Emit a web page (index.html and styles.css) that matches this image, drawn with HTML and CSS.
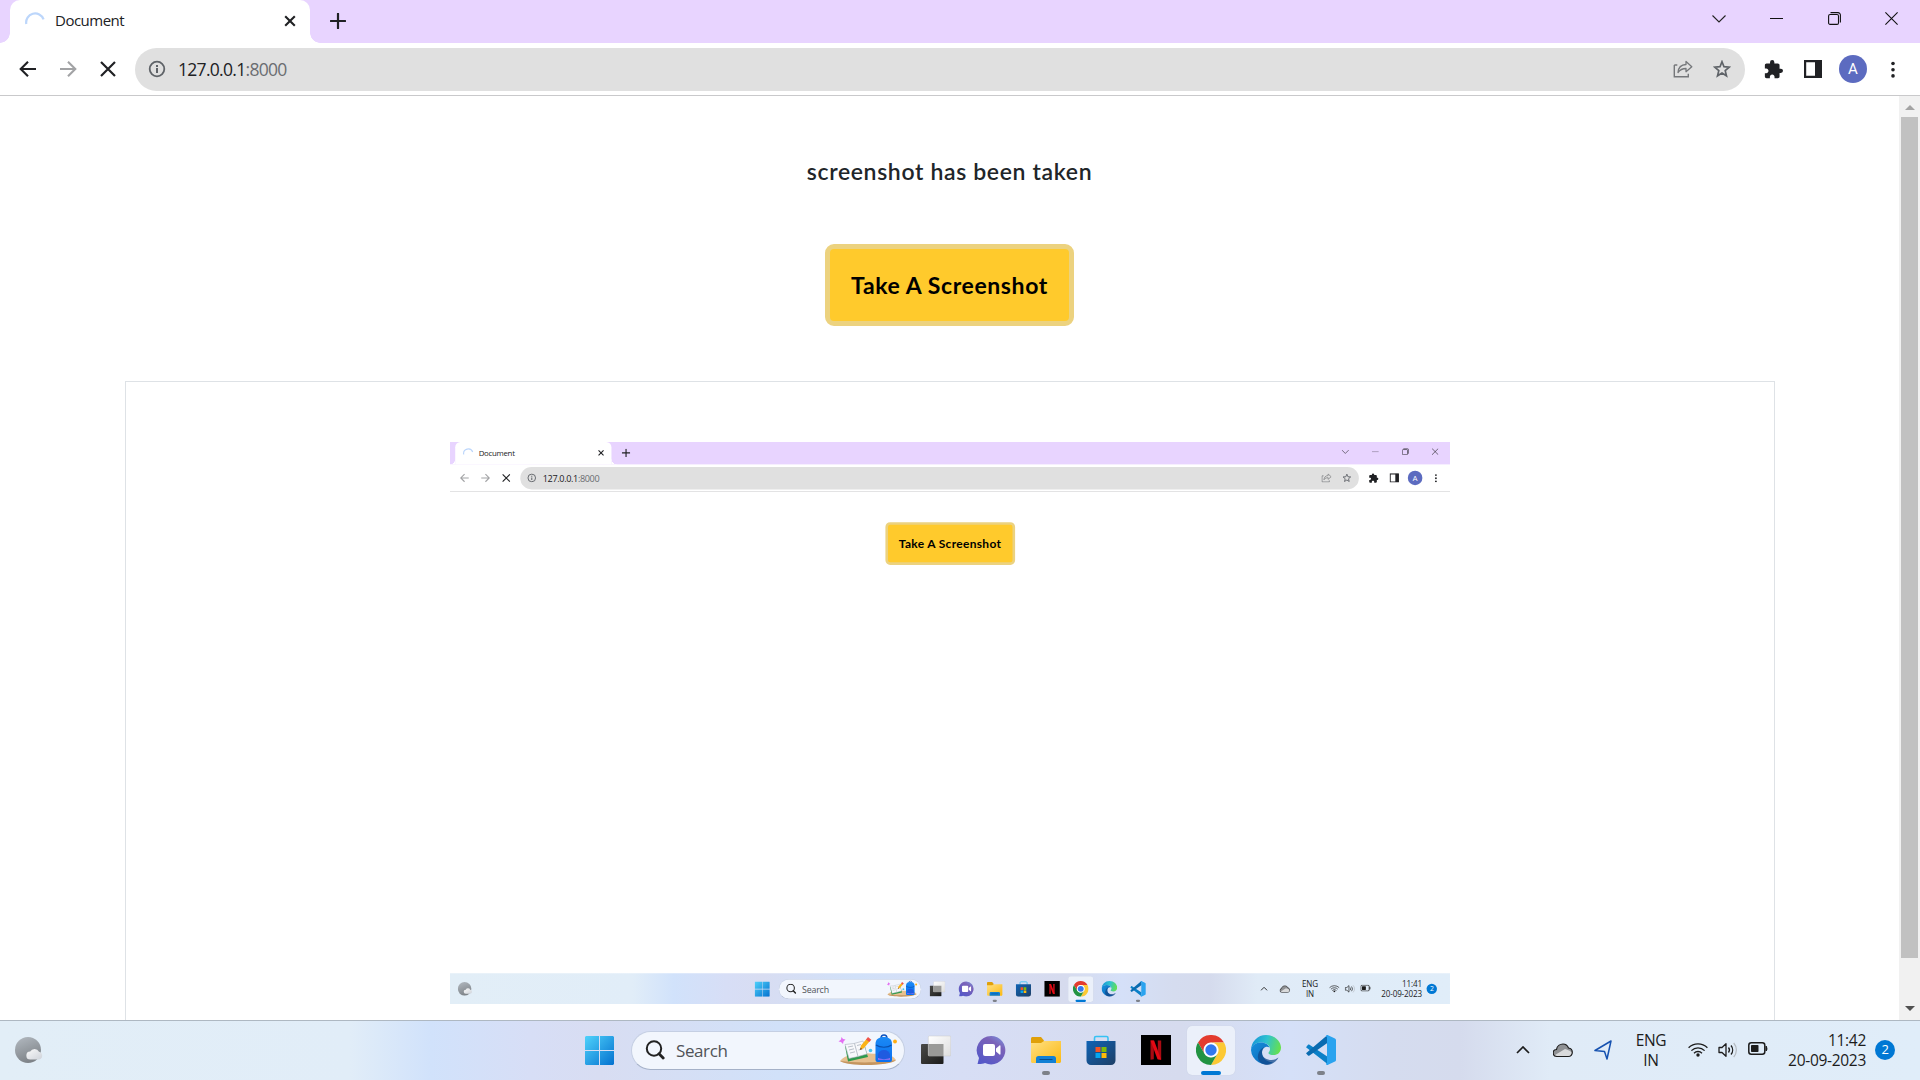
FILE: index.html
```html
<!DOCTYPE html>
<html lang="en">
<head>
<meta charset="utf-8">
<title>Document</title>
<link rel="stylesheet" href="styles.css">
</head>
<body>
<svg class="defs" width="0" height="0" aria-hidden="true">
  <defs>
    <linearGradient id="gStart" x1="0" y1="0" x2="1" y2="1"><stop offset="0" stop-color="#4fd2fb"/><stop offset="1" stop-color="#0471cf"/></linearGradient>
    <linearGradient id="gMoon" x1="0" y1="0" x2=".4" y2="1"><stop offset="0" stop-color="#b3bac1"/><stop offset="1" stop-color="#7f8489"/></linearGradient>
    <linearGradient id="gCloud" x1="0" y1="0" x2="1" y2="1"><stop offset="0" stop-color="#fafafa"/><stop offset="1" stop-color="#cfd3da"/></linearGradient>
    <linearGradient id="gChat" x1="1" y1="0" x2=".3" y2="1"><stop offset="0" stop-color="#7a9be4"/><stop offset=".35" stop-color="#7b62b8"/><stop offset="1" stop-color="#5558c8"/></linearGradient>
    <linearGradient id="gFolder" x1="0" y1="0" x2="1" y2="1"><stop offset="0" stop-color="#ffe084"/><stop offset="1" stop-color="#fbb912"/></linearGradient>
    <linearGradient id="gStore" x1="0" y1="0" x2="1" y2="1"><stop offset="0" stop-color="#0f63b5"/><stop offset="1" stop-color="#1e3f66"/></linearGradient>
    <linearGradient id="gEdgeTop" x1="0" y1=".3" x2="1" y2=".5"><stop offset="0" stop-color="#1794d8"/><stop offset=".5" stop-color="#2fc3cf"/><stop offset="1" stop-color="#66e04e"/></linearGradient>
    <linearGradient id="gEdgeLow" x1="0" y1="0" x2="1" y2="1"><stop offset="0" stop-color="#1690dc"/><stop offset="1" stop-color="#0b62b5"/></linearGradient>
    <linearGradient id="gBlack" x1="0" y1="0" x2="1" y2="1"><stop offset="0" stop-color="#4a4a48"/><stop offset="1" stop-color="#1c1c1b"/></linearGradient>
    <linearGradient id="gWhite" x1="0" y1="0" x2="1" y2="1"><stop offset="0" stop-color="#ffffff"/><stop offset="1" stop-color="#dedede"/></linearGradient>
    <linearGradient id="gBag" x1="0" y1="0" x2="0" y2="1"><stop offset="0" stop-color="#1b8af5"/><stop offset="1" stop-color="#0a6ff0"/></linearGradient>
  </defs>

  <symbol id="spinner" viewBox="0 0 20 20"><path d="M1.3 13A9 9 0 0 1 18.6 8.3" fill="none" stroke="#bcd6fb" stroke-width="2.2"/></symbol>
  <symbol id="tabclose" viewBox="0 0 12 12"><path d="M1.2 1.2l9.6 9.6M10.800 1.200l-9.600 9.600" stroke="#202124" stroke-width="2.1" fill="none"/></symbol>
  <symbol id="plus" viewBox="0 0 16 16"><path d="M8 .8v14.400M.8 8h14.400" stroke="#202124" stroke-width="2.200" fill="none" stroke-linecap="round"/></symbol>
  <symbol id="back" viewBox="0 0 18 18"><path d="M17 9H2M9 1.700L1.700 9 9 16.300" fill="none" stroke="currentColor" stroke-width="2.1"/></symbol>
  <symbol id="stop" viewBox="0 0 16 16"><path d="M1 1l14 14M15 1L1 15" fill="none" stroke="#202124" stroke-width="2.2"/></symbol>
  <symbol id="info" viewBox="0 0 18 18"><circle cx="9" cy="9" r="7.300" fill="none" stroke="#5f6368" stroke-width="1.800"/><path d="M9 8v5M9 5v1.900" stroke="#5f6368" stroke-width="2"/></symbol>
  <symbol id="share" viewBox="0 0 20 18"><path d="M1.300 5v11.700h14v-3M1.300 5h3" fill="none" stroke="#75777a" stroke-width="1.400"/><path d="M5 12.500c.4-5 3-7.800 8-8V1.400l5.800 5.300-5.800 5V8.500c-3.600 0-6 1.200-8 4z" fill="none" stroke="#75777a" stroke-width="1.300" stroke-linejoin="round"/></symbol>
  <symbol id="star" viewBox="0 0 18 18"><path d="M9 1.700l2 5 5.300.4-4.100 3.500 1.300 5.200L9 13l-4.500 2.800 1.300-5.200L1.700 7.100l5.300-.4z" fill="none" stroke="#5f6368" stroke-width="1.700"/></symbol>
  <symbol id="puzzle" viewBox="1 1 22 22"><path d="M20.500 11H19V7c0-1.100-.9-2-2-2h-4V3.500a2.500 2.500 0 0 0-5 0V5H4c-1.100 0-2 .9-2 2v3.800h1.500c1.500 0 2.700 1.200 2.700 2.700S5 16.200 3.500 16.200H2V20c0 1.100.9 2 2 2h3.800v-1.500c0-1.500 1.200-2.700 2.700-2.700s2.700 1.200 2.700 2.700V22H17c1.100 0 2-.9 2-2v-4h1.500a2.500 2.500 0 0 0 0-5z" fill="#202124"/></symbol>
  <symbol id="panel" viewBox="0 0 18 18"><path d="M1.100 1.100h15.800v15.800H1.100z" fill="#fff" stroke="#202124" stroke-width="2.200"/><path d="M11 1h6v16h-6z" fill="#202124"/></symbol>
  <symbol id="dots" viewBox="0 0 4 16"><g fill="#202124"><circle cx="2" cy="2" r="1.800"/><circle cx="2" cy="8.200" r="1.800"/><circle cx="2" cy="14.400" r="1.800"/></g></symbol>
  <symbol id="wchev" viewBox="0 0 14 8"><path d="M.5.500L7 7 13.500.500" fill="none" stroke="#222" stroke-width="1.100"/></symbol>
  <symbol id="wmin" viewBox="0 0 14 2"><path d="M0 .5h13" stroke="#111" stroke-width="1"/></symbol>
  <symbol id="wrestore" viewBox="0 0 13 13"><rect x=".6" y="2.500" width="9.900" height="9.900" rx="1.500" fill="none" stroke="#111" stroke-width="1.100"/><path d="M2.500.6h7.500a2.400 2.400 0 0 1 2.400 2.400v7.500" fill="none" stroke="#111" stroke-width="1.100"/></symbol>
  <symbol id="wclose" viewBox="0 0 13 13"><path d="M.4.400l12.200 12.200M12.600.400L.4 12.600" stroke="#111" stroke-width="1.100"/></symbol>

  <symbol id="weather" viewBox="0 0 28 26"><circle cx="13" cy="13" r="13" fill="url(#gMoon)"/><path d="M15.500 22.500a4 4 0 0 1-.3-8 5 5 0 0 1 8.800.2 4 4 0 0 1 .2 7.800z" fill="url(#gCloud)"/></symbol>
  <symbol id="start" viewBox="0 0 29 29"><path d="M1 0h13v14H0V1zM15 0h13l1 1v13H15zM0 15h14v14H1l-1-1zM15 15h14v13l-1 1H15z" fill="url(#gStart)"/></symbol>
  <symbol id="lens" viewBox="0 0 20 20"><circle cx="9" cy="8.500" r="7.200" fill="none" stroke="#222" stroke-width="2"/><path d="M14 13.700l4.200 4.300" stroke="#222" stroke-width="2.800" stroke-linecap="round"/></symbol>
  <symbol id="doodle" viewBox="0 0 60 32">
    <path d="M2 27C9 19 22 19 32 19.500s22-.5 26 6.500c-4 5-48 6-56 1z" fill="#e6c08f"/><path d="M2 27c15 2 41 2 56-1-5 6-48 7-56 1z" fill="#c4955f"/>
    <path d="M7 12l3 15.500 20-4.500-1-3-3-11z" fill="#2e9a4c"/><path d="M7 10.500l9-1 9-2.500 4 13-9 2.500-9 2z" fill="#f7f8fb" stroke="#a9b0bc" stroke-width=".6"/><path d="M16.500 9.500l3.500 13M10 13l5-1M11 16l5-1.200M12 19l5-1.200M19 11.500l4-1M20.500 16l5-1.300" stroke="#aab1bc" stroke-width=".8"/>
    <path d="M22 16l1-4.500L28.500 5l3 2.500L26 14z" fill="#fbb318"/><path d="M28 5.500L30 3l3.300 2.700-2 2.300z" fill="#f0534b"/><path d="M22 16l.5-2.500 1.700 1.500z" fill="#7b4a23"/>
    <path d="M43 4.500Q43 1 46 1t3 3.500" fill="none" stroke="#0a50bd" stroke-width="1.400"/><path d="M37.500 26V10c0-5 3.500-7 8.300-7S54 5 54 10v16a2 2 0 0 1-2 2H39.500a2 2 0 0 1-2-2z" fill="url(#gBag)"/><path d="M38 11c4 3 12 3 15.500 0" fill="none" stroke="#0a4fae" stroke-width="1.200"/><path d="M40 25v-4a6 5 0 0 1 12 0v4z" fill="#1f5be0"/><path d="M40 24c3 1.500 9 1.500 12 0v1.800H40z" fill="#a26ef2"/>
    <path d="M3.500 3l1.500 2 2.500.5L5.500 7.500 5 10 3 8 .5 7.500 3 5.500z" fill="#e36ff3"/><circle cx="32.500" cy="16.500" r="1.800" fill="#49c5ef"/><circle cx="57" cy="7.500" r="1.900" fill="#ffae12"/>
  </symbol>
  <symbol id="taskview" viewBox="0 0 30 30"><rect x="0" y="9" width="22.500" height="20" rx="1" fill="url(#gBlack)"/><rect x="7.300" y="1" width="22.500" height="20" rx="1" fill="url(#gWhite)" stroke="#c9c9c9" stroke-width=".5"/><path d="M7.500 9h15v12h-15z" fill="#9a9a98"/></symbol>
  <symbol id="chat" viewBox="0 0 30 30"><path d="M15 1a14.200 14.200 0 1 1-6 27c-2 .8-5 1.300-7.500 1L3 23A14.300 14.300 0 0 1 15 1z" fill="url(#gChat)"/><rect x="7" y="9" width="12" height="12" rx="2" fill="#fff"/><path d="M20 13.500l3.500-3c.5-.4 1 0 1 .5v8c0 .5-.5.900-1 .5l-3.500-3z" fill="#fff"/></symbol>
  <symbol id="explorer" viewBox="0 0 30 30"><path d="M0 3.500C0 2.700.7 2 1.500 2H10l3 3.500V10H0z" fill="#e0a009"/><path d="M0 8h10l3-2h17v20.500c0 .8-.7 1.500-1.500 1.500h-27C.700 28 0 27.300 0 26.500z" fill="url(#gFolder)"/><path d="M5 28v-4.500a2.500 2.500 0 0 1 2.500-2.500h15a2.500 2.500 0 0 1 2.500 2.500V28z" fill="#1180d5"/><path d="M8.500 24.500h13" stroke="#084d8d" stroke-width="1"/></symbol>
  <symbol id="store" viewBox="0 0 30 30"><path d="M8.500 7V3c0-1 .5-1.500 1.500-1.500h10.500c1 0 1.500.5 1.500 1.500v4" fill="none" stroke="#37c2f4" stroke-width="1.600"/><path d="M.5 6h29v19.500a4.500 4.500 0 0 1-4.500 4.500H5a4.500 4.500 0 0 1-4.500-4.500z" fill="url(#gStore)"/><path d="M9.500 12h5v5h-5z" fill="#f35325"/><path d="M15.500 12h5v5h-5z" fill="#81bc06"/><path d="M9.500 18h5v5h-5z" fill="#05a6f0"/><path d="M15.500 18h5v5h-5z" fill="#ffba08"/></symbol>
  <symbol id="netflix" viewBox="0 0 30 30"><path d="M0 0h30v30H0z"/><path d="M9.500 5.500h3.300v18.800l-3.300.5zM16.800 5.500h3.400v19.300l-3.400-.5z" fill="#a90a12"/><path d="M9.500 5.500h3.600l7.100 19.300-3.700-.5z" fill="#e50914"/></symbol>
  <symbol id="chrome" viewBox="0 0 30 30"><path d="M2 7.500A15 15 0 0 1 28 7.500H15a7.500 7.500 0 0 0-6.500 11.200z" fill="#e33b2e"/><path d="M28 7.500A15 15 0 0 1 15 30l6.500-11.200A7.500 7.500 0 0 0 15 7.500z" fill="#fcc934"/><path d="M15 30A15 15 0 0 1 2 7.500l6.500 11.300a7.500 7.500 0 0 0 13 0z" fill="#229342"/><circle cx="15" cy="15" r="7.200" fill="#fff"/><circle cx="15" cy="15" r="5.700" fill="#3178ee"/></symbol>
  <symbol id="edge" viewBox="0 0 30 30"><path d="M0 15A15 15 0 0 1 15 0c9 0 15 6.500 15 12.500 0 5-3.500 7.500-7.500 7.500-3 0-5.300-1-5-2.200.2-.8 1.500-1.500 1.500-3.800C19 10 14.500 7.500 10 7.500 4.500 7.500 1 10.500 0 15z" fill="url(#gEdgeTop)"/><path d="M0 15C.5 10.500 4.500 7.500 10 7.500c4.500 0 7.500 2.500 8.500 5-3-2-7.500 0-7.500 5C11 24 17 27 22 27.500A15 15 0 0 1 0 15z" fill="url(#gEdgeLow)"/><path d="M11 17.500c0 5.500 5 7.500 9.500 7.500 3 0 5.500-1.500 7-2.500C26 26 21 30 15 30 8 29 5 23 8 17c1.500-3 4-4.500 6-5-2 1-3 3-3 5.500z" fill="#114a8b" opacity=".75"/></symbol>
  <symbol id="vscode" viewBox="0 0 30 30"><path d="M21.500 1v28L0 12.200l2-2.400c.4-.4 1-.4 1.500 0L22 22z" fill="#0b80c8"/><path d="M21.500 0L0 18.300l2 2.200c.4.400 1 .4 1.500 0L22 7.500z" fill="#0a6bb0"/><path d="M21.500 0L29 3.500c.6.300 1 1 1 1.600v19.800c0 .7-.4 1.300-1 1.600L21.500 30c-1 0-1.500-.5-1.500-1.500l2-1.500V3l-2-1.500C20 .5 20.500 0 21.500 0z" fill="#2aa3ef"/><path d="M21.500 0v30" stroke="#2aa3ef"/></symbol>

  <symbol id="up" viewBox="0 0 14 8"><path d="M1 7l6-6 6 6" fill="none" stroke="#1c1c1c" stroke-width="1.700"/></symbol>
  <symbol id="cloud" viewBox="0 0 20 15"><path d="M4 13.500a3.500 3.500 0 0 1-.5-7C4 3 7 1 10 1s4.500 1.500 5.500 4c2.500.3 3.800 2.200 3.800 4.300 0 2.500-1.800 4.200-4.300 4.200z" fill="#8f9194" stroke="#1d1d1d" stroke-width="1.200"/><path d="M2 12l10-6c2 1 5 1 6.500 3.500 0 2-1.500 3.400-3.500 3.400H4z" fill="#d9dadb"/></symbol>
  <symbol id="locate" viewBox="0 0 18 20"><path d="M17 1L1 10.500l9.500 1L13 19z" fill="none" stroke="#1551b0" stroke-width="1.500" stroke-linejoin="round"/></symbol>
  <symbol id="wifi" viewBox="0 0 20 15"><g fill="none" stroke="#1c1c1c" stroke-width="1.300"><path d="M.6 5.800a13.300 13.300 0 0 1 18.800 0"/><path d="M3.400 8.600a9.300 9.300 0 0 1 13.200 0"/><path d="M6 11.200a5.600 5.600 0 0 1 8 0"/></g><circle cx="10" cy="13" r="1.700" fill="#1c1c1c"/></symbol>
  <symbol id="volume" viewBox="0 0 20 16"><path d="M1 5.500h3L8 1.700v12.600L4 10.500H1z" fill="none" stroke="#1c1c1c" stroke-width="1.300" stroke-linejoin="round"/><path d="M10.500 5.500a4 4 0 0 1 0 5M13 3.500a7 7 0 0 1 0 9" fill="none" stroke="#1c1c1c" stroke-width="1.300"/><path d="M15.700 1a10.500 10.500 0 0 1 0 14" fill="none" stroke="#b5bac0" stroke-width="1.200"/></symbol>
  <symbol id="battery" viewBox="0 0 20 13"><rect x=".8" y=".8" width="16" height="11.400" rx="2.500" fill="none" stroke="#1c1c1c" stroke-width="1.500"/><rect x="3" y="3" width="7.500" height="7" rx=".8" fill="#1c1c1c"/><path d="M17.500 4h1.300q1.200 2.500 0 5h-1.300z" fill="#1c1c1c"/></symbol>
</svg>

<main class="desktop">
  <header class="tabstrip">
    <div class="tab">
      <svg class="spinner"><use href="#spinner"/></svg>
      <span class="tab-title">Document</span>
      <svg class="tab-close"><use href="#tabclose"/></svg>
    </div>
    <svg class="newtab"><use href="#plus"/></svg>
    <div class="window-controls">
      <span><svg width="14" height="8"><use href="#wchev"/></svg></span>
      <span><svg width="14" height="2"><use href="#wmin"/></svg></span>
      <span><svg width="13" height="13"><use href="#wrestore"/></svg></span>
      <span><svg width="13" height="13"><use href="#wclose"/></svg></span>
    </div>
  </header>
  <nav class="toolbar">
    <span class="nav"><svg width="18" height="18"><use href="#back"/></svg></span>
    <span class="nav forward"><svg width="18" height="18"><use href="#back"/></svg></span>
    <span class="nav"><svg width="16" height="16"><use href="#stop"/></svg></span>
    <div class="omnibox">
      <svg width="18" height="18"><use href="#info"/></svg>
      <span class="url">127.0.0.1<i>:8000</i></span>
      <svg class="share" width="20" height="18"><use href="#share"/></svg>
      <svg width="18" height="18"><use href="#star"/></svg>
    </div>
    <span class="action"><svg width="19" height="19"><use href="#puzzle"/></svg></span>
    <span class="action"><svg width="18" height="18"><use href="#panel"/></svg></span>
    <span class="action"><b class="avatar">A</b></span>
    <span class="action"><svg width="4" height="17"><use href="#dots"/></svg></span>
  </nav>

  <div class="viewport">
    <section class="page">
      <h1 class="message"><span>screenshot has been taken</span></h1>
      <button class="shoot"><span>Take A Screenshot</span></button>
      <div class="gallery">
        <div class="frame">
          <div class="desktop small">
            <header class="tabstrip">
              <div class="tab">
                <svg class="spinner"><use href="#spinner"/></svg>
                <span class="tab-title">Document</span>
                <svg class="tab-close"><use href="#tabclose"/></svg>
              </div>
              <svg class="newtab"><use href="#plus"/></svg>
              <div class="window-controls">
                <span><svg width="14" height="8"><use href="#wchev"/></svg></span>
                <span><svg width="14" height="2"><use href="#wmin"/></svg></span>
                <span><svg width="13" height="13"><use href="#wrestore"/></svg></span>
                <span><svg width="13" height="13"><use href="#wclose"/></svg></span>
              </div>
            </header>
            <nav class="toolbar">
              <span class="nav off"><svg width="18" height="18"><use href="#back"/></svg></span>
              <span class="nav forward"><svg width="18" height="18"><use href="#back"/></svg></span>
              <span class="nav"><svg width="16" height="16"><use href="#stop"/></svg></span>
              <div class="omnibox">
                <svg width="18" height="18"><use href="#info"/></svg>
                <span class="url">127.0.0.1<i>:8000</i></span>
                <svg class="share" width="20" height="18"><use href="#share"/></svg>
                <svg width="18" height="18"><use href="#star"/></svg>
              </div>
              <span class="action"><svg width="19" height="19"><use href="#puzzle"/></svg></span>
              <span class="action"><svg width="18" height="18"><use href="#panel"/></svg></span>
              <span class="action"><b class="avatar">A</b></span>
              <span class="action"><svg width="4" height="17"><use href="#dots"/></svg></span>
            </nav>
            <div class="viewport">
              <section class="page first">
                <button class="shoot"><span>Take A Screenshot</span></button>
              </section>
            </div>
            <footer class="taskbar">
              <svg class="weather" width="28" height="26"><use href="#weather"/></svg>
              <svg class="start" width="29" height="29"><use href="#start"/></svg>
              <div class="search"><svg width="20" height="20"><use href="#lens"/></svg><span>Search</span><svg class="doodle" width="60" height="32"><use href="#doodle"/></svg></div>
              <div class="apps">
                <span><svg><use href="#taskview"/></svg></span>
                <span><svg><use href="#chat"/></svg></span>
                <span class="running"><svg><use href="#explorer"/></svg></span>
                <span><svg><use href="#store"/></svg></span>
                <span><svg><use href="#netflix"/></svg></span>
                <span class="running active"><svg><use href="#chrome"/></svg></span>
                <span><svg><use href="#edge"/></svg></span>
                <span class="running"><svg><use href="#vscode"/></svg></span>
              </div>
              <div class="tray">
                <span class="cell"><svg width="14" height="8"><use href="#up"/></svg></span>
                <span class="cell"><svg width="20" height="15"><use href="#cloud"/></svg></span>
                <span class="lang">ENG<br>IN</span>
                <span class="status"><svg width="20" height="15"><use href="#wifi"/></svg><svg width="20" height="16"><use href="#volume"/></svg><svg width="20" height="13"><use href="#battery"/></svg></span>
                <span class="clock">11:41<br>20-09-2023</span>
                <span class="badge">2</span>
              </div>
            </footer>
          </div>
        </div>
      </div>
    </section>
    <aside class="scrollbar"><i class="arrow-up"></i><i class="thumb"></i><i class="arrow-down"></i></aside>
  </div>

  <footer class="taskbar">
    <svg class="weather" width="28" height="26"><use href="#weather"/></svg>
    <svg class="start" width="29" height="29"><use href="#start"/></svg>
    <div class="search"><svg width="20" height="20"><use href="#lens"/></svg><span>Search</span><svg class="doodle" width="60" height="32"><use href="#doodle"/></svg></div>
    <div class="apps">
      <span><svg><use href="#taskview"/></svg></span>
      <span><svg><use href="#chat"/></svg></span>
      <span class="running"><svg><use href="#explorer"/></svg></span>
      <span><svg><use href="#store"/></svg></span>
      <span><svg><use href="#netflix"/></svg></span>
      <span class="running active"><svg><use href="#chrome"/></svg></span>
      <span><svg><use href="#edge"/></svg></span>
      <span class="running"><svg><use href="#vscode"/></svg></span>
    </div>
    <div class="tray">
      <span class="cell"><svg width="14" height="8"><use href="#up"/></svg></span>
      <span class="cell"><svg width="20" height="15"><use href="#cloud"/></svg></span>
      <span class="cell"><svg width="18" height="20"><use href="#locate"/></svg></span>
      <span class="lang">ENG<br>IN</span>
      <span class="status"><svg width="20" height="15"><use href="#wifi"/></svg><svg width="20" height="16"><use href="#volume"/></svg><svg width="20" height="13"><use href="#battery"/></svg></span>
      <span class="clock">11:42<br>20-09-2023</span>
      <span class="badge">2</span>
    </div>
  </footer>
</main>
</body>
</html>
```
FILE: styles.css
```css
* { box-sizing: border-box; }
html, body { margin: 0; height: 100%; overflow: hidden; }
svg { display: block; flex: none; }
i { font-style: normal; }
.defs { position: absolute; }

.desktop {
  width: 1920px;
  height: 1080px;
  display: flex;
  flex-direction: column;
  background: #fff;
  font-family: "Open Sans", "Noto Sans", sans-serif;
  color: #202124;
  overflow: hidden;
}

/* Tab strip */
.tabstrip { height: 43px; flex: none; display: flex; background: #e8d4ff; padding-left: 10px; }
.tab {
  position: relative;
  width: 300px;
  height: 43px;
  padding: 0 14px 1px 15px;
  display: flex;
  align-items: center;
  background: #fff;
  border-radius: 10px 10px 0 0;
}
.tab::before, .tab::after {
  content: "";
  position: absolute;
  bottom: 0;
  width: 10px;
  height: 10px;
}
.tab::before { left: -10px; background: radial-gradient(circle at 0 0, #e8d4ff 9.5px, #fff 10px); }
.tab::after { right: -10px; background: radial-gradient(circle at 100% 0, #e8d4ff 9.5px, #fff 10px); }
.spinner { width: 20px; height: 20px; }
.tab-title { margin-left: 10px; padding-bottom: 2px; flex: 1; font-size: 15px; letter-spacing: -0.5px; }
.tab-close { width: 12px; height: 12px; }
.newtab { width: 16px; height: 16px; margin: 13px 0 0 20px; }
.window-controls { margin-left: auto; display: flex; height: 37px; }
.window-controls span { width: 57.3px; display: flex; align-items: center; justify-content: center; }

/* Toolbar */
.toolbar { height: 53px; flex: none; display: flex; align-items: center; padding: 0 7px 0 8px; border-bottom: 1px solid #c9c9cb; }
.nav { width: 40px; display: flex; justify-content: center; }
.forward { transform: scaleX(-1); }
.forward, .off { color: #a2a3a5; }
.omnibox {
  width: 1610px;
  height: 43px;
  margin: 0 8px 0 7px;
  padding: 0 14px 0 13px;
  display: flex;
  align-items: center;
  background: #e0e0e0;
  border-radius: 22px;
}
.url { flex: 1; margin-left: 12px; font-size: 17.5px; letter-spacing: -0.7px; }
.url i { color: #6a6d71; }
.share { margin-right: 20px; }
.action { width: 40px; display: flex; justify-content: center; }
.avatar {
  width: 28px;
  height: 28px;
  border-radius: 50%;
  background: #5c6bc0;
  color: #fff;
  font: 400 15px/29px Roboto, sans-serif;
  text-align: center;
}

/* Page */
.viewport { flex: 1; min-height: 0; display: flex; overflow: hidden; }
.page { flex: 1; display: flex; flex-direction: column; align-items: center; }
.message {
  margin: 60px 0 57px;
  font: 600 23px/31px Lato, sans-serif;
  color: #212529;
  white-space: nowrap;
  letter-spacing: 0.65px;
}
.shoot {
  width: 249px;
  height: 82px;
  flex: none;
  padding: 0;
  border: 5px solid #ecd27f;
  border-radius: 9px;
  background: #ffca2c;
  color: #000;
  font: 700 23px/30px Lato, sans-serif;
  letter-spacing: 0.6px;
  white-space: nowrap;
}
.gallery {
  width: 1650px;
  flex: 1;
  margin-top: 55px;
  padding-top: 60px;
  border: 1px solid #dee2e6;
  border-bottom: 0;
  display: flex;
  justify-content: center;
}
.frame { width: 1000px; height: 562px; overflow: hidden; }
.small { transform: scale(0.520833); transform-origin: 0 0; }
.first { padding-top: 58px; }

.scrollbar { width: 21px; background: #f1f1f1; display: flex; flex-direction: column; align-items: center; padding: 9px 0 9px; }
.arrow-up, .arrow-down { border: 5px solid transparent; }
.arrow-up { border-top: 0; border-bottom-color: #a3a3a3; }
.arrow-down { border-bottom: 0; border-top-color: #505050; margin-top: auto; }
.thumb { width: 17px; height: 841px; margin-top: 7px; background: #c1c1c1; }

/* Taskbar */
.taskbar {
  height: 60px;
  flex: none;
  display: flex;
  align-items: center;
  padding: 0 25px 1px 15px;
  border-top: 1px solid #aeb8c2;
  background: linear-gradient(90deg, #e2eef7 0, #e1edf8 350px, #d1e2fb 430px, #d7def6 530px, #d8ddf2 600px, #d1e1f9 780px, #d7def5 960px, #d6dbee 1180px, #d5e0f8 1290px, #d5dcef 1390px, #d5dbed 1460px, #e0ebf7 1550px, #e0edf9 1920px);
}
.small .taskbar { border-top-color: transparent; background-clip: border-box; background-origin: border-box; }
.weather { margin-right: 542px; }
.search {
  width: 274px;
  height: 39px;
  margin: 0 7px 0 17px;
  padding: 0 6px 0 13px;
  display: flex;
  align-items: center;
  background: #f2f6fd;
  border: 1px solid #c5cfe3;
  border-bottom-color: #a5b1c8;
  border-radius: 20px;
}
.search span { flex: 1; margin-left: 11px; font-size: 17px; letter-spacing: -0.4px; color: #505357; }
.apps { display: flex; align-items: center; }
.apps span { position: relative; width: 48px; height: 49px; margin-right: 7px; display: flex; align-items: center; justify-content: center; border-radius: 5px; }
.apps svg { width: 30px; height: 30px; }
.apps .active { background: #ebf0fa; box-shadow: 0 0 1px #bcc5d8; }
.running::after { content: ""; position: absolute; bottom: 0; left: 20px; width: 8px; height: 4px; border-radius: 2px; background: #7d8189; }
.active::after { left: 14px; width: 20px; background: #0078d4; }
.tray { margin-left: auto; display: flex; align-items: center; font-size: 15.5px; line-height: 20px; letter-spacing: -0.3px; color: #1c1c1c; }
.cell { width: 40px; display: flex; justify-content: center; }
.lang { width: 56px; margin-right: 9px; text-align: center; }
.status { display: flex; gap: 10px; }
.clock { width: 98px; text-align: right; }
.badge { width: 20px; height: 20px; margin-left: 9px; border-radius: 50%; background: #0078d4; color: #fff; font-size: 13px; line-height: 19px; text-align: center; }
```
